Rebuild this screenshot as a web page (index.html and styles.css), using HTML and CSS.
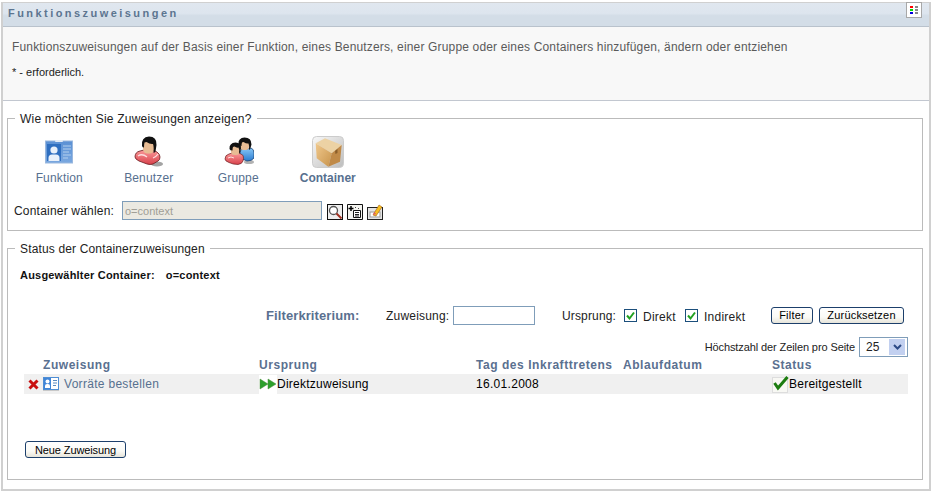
FILE: index.html
```html
<!DOCTYPE html>
<html lang="de">
<head>
<meta charset="utf-8">
<title>Funktionszuweisungen</title>
<link rel="stylesheet" href="styles.css">
</head>
<body>
<svg width="0" height="0" class="defs">
  <defs>
    <linearGradient id="card" x1="0" y1="0" x2="0" y2="1"><stop offset="0" stop-color="#5a90d4"/><stop offset="1" stop-color="#7aa8e0"/></linearGradient>
    <linearGradient id="red" x1="0" y1="0" x2="0" y2="1"><stop offset="0" stop-color="#fb9a9a"/><stop offset="1" stop-color="#d8404a"/></linearGradient>
    <linearGradient id="blue" x1="0" y1="0" x2="0" y2="1"><stop offset="0" stop-color="#88c8f8"/><stop offset="1" stop-color="#2c7cd0"/></linearGradient>
    <linearGradient id="boxl" x1="0" y1="0" x2="1" y2="1"><stop offset="0" stop-color="#f0c88c"/><stop offset="1" stop-color="#c8944c"/></linearGradient>
    <linearGradient id="tile" x1="0" y1="0" x2="1" y2="1"><stop offset="0" stop-color="#f8f8f8"/><stop offset="1" stop-color="#bdbdbd"/></linearGradient>
  </defs>
</svg>
<main class="frame">
  <header class="titlebar">
    <h1 class="title">Funktionszuweisungen</h1>
    <span class="legend-btn">
      <svg width="16" height="16" viewBox="0 0 16 16"><rect x=".5" y=".5" width="15" height="15" fill="#fff" stroke="#a8a8a8"/><rect x="4" y="4" width="3" height="2" fill="#f00"/><rect x="4" y="7" width="3" height="2" fill="#0d0"/><rect x="4" y="10" width="3" height="2" fill="#00d"/><rect x="9" y="4" width="3" height="2" fill="#888"/><rect x="9" y="7" width="3" height="2" fill="#888"/><rect x="9" y="10" width="3" height="2" fill="#888"/></svg>
    </span>
  </header>
  <section class="intro">
    <p class="intro-text">Funktionszuweisungen auf der Basis einer Funktion, eines Benutzers, einer Gruppe oder eines Containers hinzufügen, ändern oder entziehen</p>
    <p class="intro-note">* - erforderlich.</p>
  </section>

  <fieldset class="box box-view">
    <legend class="box-legend">Wie möchten Sie Zuweisungen anzeigen?</legend>
    <div class="views">
      <a class="view">
        <svg class="view-icon" width="32" height="32" viewBox="0 0 32 32">
          <rect x="2.500" y="5" width="27" height="22" fill="url(#card)" stroke="#9ab8de"/>
          <rect x="12" y="4" width="8" height="2" rx="1" fill="#e4ecf6"/>
          <rect x="4" y="8" width="14" height="17" fill="#2f6fc0"/>
          <circle cx="11" cy="14" r="3.600" fill="#e8f0fa"/>
          <path d="M5.500 25v-3q0-3.500 3.500-3.500h4q3.500 0 3.500 3.500v3z" fill="#e8f0fa"/>
          <path d="M20 10h8M20 13h8M20 16h6M20 19h8M20 22h5" stroke="#b4d0ee"/>
        </svg>
        <span class="view-label">Funktion</span>
      </a>
      <a class="view">
        <svg class="view-icon" width="32" height="32" viewBox="0 0 32 32">
          <ellipse cx="24" cy="28" rx="6" ry="2.500" fill="#666" opacity=".6"/>
          <path d="M2 21q0-5 5-6l4-1q4 4 9 0l4 2q3 2 3 5q0 3-2 4l-5 3q-3 1-6 0l-8-3q-4-2-4-4z" fill="url(#red)" stroke="#6a1c20" stroke-width=".8"/>
          <path d="M5 20q4-3 9 1M20 22q3-1 5-4" stroke="#fde0e0" stroke-width="1.300" fill="none"/>
          <rect x="10" y="4" width="11" height="13.500" rx="4.500" fill="#e8bc94"/>
          <path d="M9 10q-1-9 7-9.500q8 0 7.500 8.500l-1 6.500q-1.500 2-2 1q.5-6-.5-8.500q-3 .5-6.500-2q-1 0-2 .5q-.5 2-.5 5q-1.500 0-2-1.500z" fill="#111"/>
        </svg>
        <span class="view-label">Benutzer</span>
      </a>
      <a class="view">
        <svg class="view-icon" width="32" height="32" viewBox="0 0 32 32">
          <ellipse cx="27" cy="26" rx="5" ry="2" fill="#666" opacity=".5"/>
          <path d="M18 17q0-4 4-5l3 1 4-1q3 1 3 5v5q-2 3-7 3l-7-3z" fill="url(#blue)" stroke="#123a6a" stroke-width=".7"/>
          <rect x="18" y="4" width="9" height="10" rx="3.500" fill="#e8bc94"/>
          <path d="M16.500 8q-.5-6 6-6.500q7 0 7 7l-1.500 5q-1 .5-1-.5q.5-3-.5-5.500q-2 .5-5-1.500q-1 0-1.500 .5q-.5 1.500-.5 3.500q-2.500 0-3-2z" fill="#111"/>
          <path d="M3 23q0-4 4-5l3-1q3 3 6 0l3 1q3 1 2.500 4.500l-.5 2.500q-1 3-5 3.500q-5 0-9-2q-4-1.500-4-3.500z" fill="url(#red)" stroke="#6a1c20" stroke-width=".7"/>
          <path d="M6 22q3-2 6 0" stroke="#fde0e0" fill="none"/>
          <rect x="9" y="9" width="8.500" height="10" rx="3.500" fill="#e8bc94"/>
          <path d="M7.500 13q-.5-6 6-6.500q6 0 5.500 6l-1 4q-1 1-1 0q.5-3-.5-5q-2 .5-4-1q-1 0-1.500 .5q-.5 1-.5 3.500q-2.500 0-3-1.500z" fill="#111"/>
        </svg>
        <span class="view-label">Gruppe</span>
      </a>
      <a class="view view-active">
        <svg class="view-icon" width="32" height="32" viewBox="0 0 32 32">
          <rect x=".5" y=".5" width="31" height="31" rx="4" fill="url(#tile)" stroke="#ccc"/>
          <path d="M3.700 7.300L13 2.300l16.700 6.700-10 8.300z" fill="#ecd2a4"/>
          <path d="M3.700 7.300l16 10-3.400 13.400-11.600-8.400z" fill="url(#boxl)"/>
          <path d="M19.700 17.300l10-8.300-1.700 16.700-11.700 5z" fill="#c08a48"/>
          <path d="M23 15l2.500-2v4l-2 1z" fill="#8a5e2a"/>
        </svg>
        <span class="view-label">Container</span>
      </a>
    </div>
    <div class="picker">
      <label class="picker-label" for="ctx">Container wählen:</label>
      <input class="picker-input" id="ctx" type="text" value="o=context" disabled>
      <span class="tool">
        <svg width="16" height="16" viewBox="0 0 16 16"><rect x=".5" y=".5" width="15" height="15" fill="#eee" stroke="#111"/><circle cx="6.500" cy="6.500" r="4" fill="#fff" stroke="#555" stroke-width="1.300"/><path d="M9.500 9.500l5 5" stroke="#a03020" stroke-width="2"/></svg>
      </span>
      <span class="tool">
        <svg width="16" height="16" viewBox="0 0 16 16"><path d="M.5.5h15v15h-15z" fill="#f4f4f0" stroke="#111"/><path d="M6.500 6.500h7v7h-7z" fill="#fff" stroke="#111"/><path d="M8 8.500h4M8 10.500h4M8 12h4" stroke="#222"/><path d="M4 2v5M1.500 4.500h5" stroke="#000" stroke-width="1.500"/><path d="M8 3.500h1M11 4.500h1" stroke="#444"/></svg>
      </span>
      <span class="tool">
        <svg width="16" height="16" viewBox="0 0 16 16"><rect x=".5" y="3.500" width="15" height="12" fill="#e4e4e4" stroke="#222"/><rect x="3" y="8" width="10" height="5" fill="#fff" stroke="#999"/><path d="M6 11L12 1l3 2-6 9z" fill="#f8c020" stroke="#a06010" stroke-width=".6"/><path d="M6 11l1-3 2.500 2z" fill="#e06060"/></svg>
      </span>
    </div>
  </fieldset>

  <fieldset class="box box-status">
    <legend class="box-legend">Status der Containerzuweisungen</legend>
    <p class="selected"><span>Ausgewählter Container:</span><span>o=context</span></p>

    <form class="filters">
      <span class="filter-title">Filterkriterium:</span>
      <label class="filter-label" for="fz">Zuweisung:</label>
      <input class="filter-input" id="fz" type="text">
      <span class="filter-label filter-origin">Ursprung:</span>
      <span class="check"><svg width="13" height="13" viewBox="0 0 13 13"><rect x=".5" y=".5" width="12" height="12" fill="#fff" stroke="#1c4f7c"/><path d="M3 6.500l2.500 3L10 3.500" fill="none" stroke="#21a121" stroke-width="2"/></svg></span>
      <span class="check-text">Direkt</span>
      <span class="check"><svg width="13" height="13" viewBox="0 0 13 13"><rect x=".5" y=".5" width="12" height="12" fill="#fff" stroke="#1c4f7c"/><path d="M3 6.500l2.500 3L10 3.500" fill="none" stroke="#21a121" stroke-width="2"/></svg></span>
      <span class="check-text check-last">Indirekt</span>
      <button class="btn btn-filter" type="button">Filter</button>
      <button class="btn btn-reset" type="button">Zurücksetzen</button>
    </form>

    <div class="pager">
      <span>Höchstzahl der Zeilen pro Seite</span>
      <span class="select">
        <span>25</span>
        <span class="select-arrow"><svg width="9" height="7" viewBox="0 0 9 7"><path d="M1 1l3.500 3.500L8 1" fill="none" stroke="#2c4a86" stroke-width="2"/></svg></span>
      </span>
    </div>

    <div class="grid grid-head">
      <span class="cell-name">Zuweisung</span>
      <span>Ursprung</span>
      <span>Tag des Inkrafttretens</span>
      <span>Ablaufdatum</span>
      <span>Status</span>
    </div>
    <div class="grid grid-row">
      <span class="cell-name cell-main">
        <svg class="del" width="11" height="11" viewBox="0 0 11 11"><path d="M1.500 1.500l8 8M9.500 1.500l-8 8" stroke="#c81010" stroke-width="3"/></svg>
        <svg class="mini" width="16" height="14" viewBox="0 0 16 14"><rect x=".5" y=".5" width="15" height="12" fill="#fff" stroke="#4f8ed4"/><rect x="1" y="1" width="7" height="11" fill="#3f85d8"/><circle cx="4.500" cy="4.500" r="2" fill="#fff"/><path d="M2 11V9q0-2 2-2h1q2 0 2 2v2z" fill="#fff"/><path d="M10 3.500h4M10 6h4M10 8.500h3" stroke="#5a8ac0"/><path d="M0 13.500h16" stroke="#c8c8c8"/></svg>
        <a class="row-link">Vorräte bestellen</a>
      </span>
      <span class="cell-flag"><svg width="18" height="19" viewBox="0 0 18 19"><rect width="18" height="19" fill="#fff"/><path d="M1 4l8 5-8 5zM9 4l8 5-8 5z" fill="#2ca02c" stroke="#4a8a3a" stroke-width=".5"/></svg>Direktzuweisung</span>
      <span class="cell-date">16.01.2008</span>
      <span></span>
      <span class="cell-flag"><svg width="17" height="18" viewBox="0 0 17 18"><rect x=".5" y="2.500" width="15" height="15" fill="#f8f8f4" stroke="#ddd"/><path d="M2.500 8l3.500 5L15.500 2" fill="none" stroke="#1c7c10" stroke-width="3"/></svg>Bereitgestellt</span>
    </div>

    <button class="btn btn-new" type="button">Neue Zuweisung</button>
  </fieldset>
</main>
</body>
</html>
```

FILE: styles.css
```css
* { box-sizing: border-box; }
html, body { margin: 0; padding: 0; }
body {
  background: #fff;
  font-family: "Liberation Sans", Arial, sans-serif;
  font-size: 12px;
  color: #000;
  height: 492px;
  overflow: hidden;
}
.defs { position: absolute; }
.frame {
  margin: 2px 1px 0;
  height: 489px;
  border: 2px solid #d0d0d0;
  border-top-width: 1px;
}
.titlebar {
  height: 24px;
  display: flex;
  align-items: flex-start;
  justify-content: space-between;
  padding-left: 5px;
  background: linear-gradient(#e0e7ef 0, #dde5ee 45%, #d3dde7 55%, #d3dde7 100%);
  border-bottom: 1px solid #b9c2cc;
}
.title {
  margin: 3px 0 0;
  font-size: 11px;
  line-height: 15px;
  font-weight: bold;
  letter-spacing: 2.45px;
  color: #5c7590;
}
.legend-btn { display: block; height: 16px; margin: -1px 7px 0 0; }
.legend-btn svg { display: block; }
.intro {
  height: 74px;
  padding: 13px 9px 0;
  background: #f8f8f8;
  border-bottom: 1px solid #c2c7d0;
}
.intro-text {
  margin: 0;
  line-height: 15px;
  color: #5a5a5a;
  letter-spacing: .16px;
}
.intro-note {
  margin: 11px 0 0;
  font-size: 11px;
  line-height: 13px;
  color: #222;
}
.box {
  margin: 9px 6px 0 4px;
  padding: 0;
  min-width: 0;
  border: 1px solid #bbb;
}
.box-view { height: 121px; padding: 0 6px; }
.box-status { height: 240px; padding: 0 14px 0 16px; }
.box-legend {
  padding: 2px 5px 0;
  line-height: 15px;
  color: #222;
}
.box-view .box-legend { margin-left: 1px; letter-spacing: .2px; }
.box-status .box-legend { margin-left: -9px; letter-spacing: .15px; }
.views {
  display: flex;
  padding: 9px 0 0 .5px;
}
.view {
  width: 89.500px;
  display: flex;
  flex-direction: column;
  align-items: center;
  gap: 2px;
  color: #57708f;
  letter-spacing: .15px;
}
.view-icon { display: block; }
.view-label { line-height: 16px; }
.view-active .view-label { font-weight: bold; letter-spacing: 0; }
.picker {
  display: flex;
  align-items: center;
  margin-top: 15px;
  height: 19px;
}
.picker-label { width: 108px; letter-spacing: .2px; color: #222; }
.picker-input {
  width: 200px;
  height: 19px;
  padding: 0 2px;
  border: 1px solid #7f9db9;
  background: #ebe9e1;
  color: #a09e96;
  font: 11px "Liberation Sans", Arial, sans-serif;
  margin-right: 5px;
}
.tool { display: block; width: 16px; height: 16px; margin: 3px 4px 0 0; }
.tool svg { display: block; }
.selected {
  display: flex;
  gap: 11px;
  margin: 11px 0 0 -4px;
  font-weight: bold;
  font-size: 11px;
  line-height: 14px;
  color: #111;
  letter-spacing: .2px;
}
.filters {
  display: flex;
  align-items: center;
  margin-top: 23px;
  padding-left: 242px;
  height: 20px;
}
.filter-title {
  width: 120px;
  margin-top: 1px;
  font-size: 13px;
  font-weight: bold;
  color: #5a7090;
  letter-spacing: .1px;
}
.filter-label { color: #222; letter-spacing: .2px; width: 67px; margin-top: 1px; }
.filter-input {
  width: 82px;
  height: 19px;
  border: 1px solid #7f9db9;
  background: #fff;
  margin-right: 27px;
}
.filter-origin { width: 62px; letter-spacing: .15px; }
.check { display: block; height: 13px; margin: 1px 6px 0 0; }
.check svg { display: block; }
.check-text { width: 42px; letter-spacing: .25px; color: #222; margin-top: 3px; }
.check-last { width: 67px; }
.btn {
  height: 17px;
  padding: 0;
  border: 1px solid #1c3f6b;
  border-radius: 3px;
  background: linear-gradient(#fff, #fafaf6 60%, #e6e4da);
  font: 11px "Liberation Sans", Arial, sans-serif;
  letter-spacing: .2px;
  color: #000;
}
.btn-filter { width: 42px; margin-right: 6px; }
.btn-reset { width: 85px; }
.pager {
  display: flex;
  align-items: center;
  justify-content: flex-end;
  gap: 4px;
  margin-top: 12px;
  font-size: 11px;
  letter-spacing: -.1px;
  color: #222;
}
.select {
  display: flex;
  align-items: center;
  justify-content: space-between;
  width: 49px;
  height: 20px;
  padding: 0 2px 0 6px;
  border: 1px solid #7f9db9;
  font-size: 12px;
  letter-spacing: 0;
}
.select-arrow {
  display: flex;
  align-items: center;
  justify-content: center;
  width: 16px;
  height: 16px;
  background: #c2d0f0;
}
.grid {
  display: grid;
  grid-template-columns: 235px 217px 147px 149px 136px;
  width: 884px;
}
.grid-head {
  font-weight: bold;
  color: #5a7090;
  letter-spacing: .55px;
  line-height: 15px;
  margin-top: 1px;
}
.grid-head .cell-name { padding-left: 19px; }
.grid-row {
  margin-top: 1px;
  height: 20px;
  background: #f0f0f0;
  align-items: center;
}
.cell-main { display: flex; align-items: center; }
.del { margin-left: 4px; margin-right: 4px; }
.mini { margin-right: 5px; }
.row-link { color: #57708f; letter-spacing: .3px; }
.cell-flag { display: flex; align-items: center; letter-spacing: .25px; }
.cell-date { letter-spacing: .3px; }
.btn-new { display: block; width: 101px; margin: 47px 0 0 1px; letter-spacing: -.1px; }
```
